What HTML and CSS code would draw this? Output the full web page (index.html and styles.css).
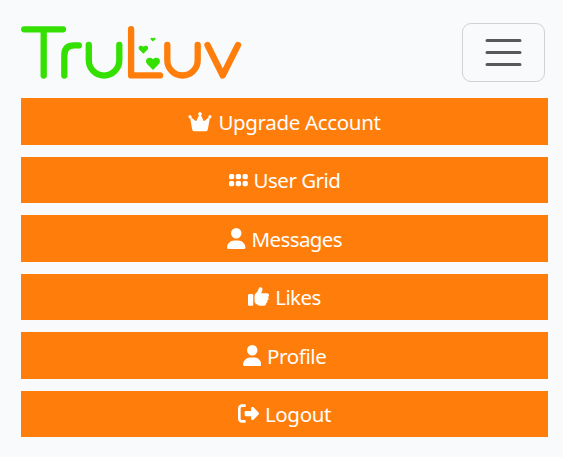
FILE: index.html
```html
<!DOCTYPE html>
<html lang="en">
<head>
<meta charset="utf-8">
<title>TruLuv</title>
<link rel="stylesheet" href="styles.css">
</head>
<body>
<header class="bar">
  <svg class="logo" viewBox="21 26 221 54" role="img" aria-label="TruLuv">
    <g class="stroke green">
      <path d="M24.2 29.3H63M43.7 29.3V75.5"/>
      <path d="M64.3 75.500V55.400Q64.300 45.400 74.300 45.400H78.800"/>
      <path d="M88.8 45V60.3a15.25 15.25 0 0 0 30.5 0V45"/>
    </g>
    <g class="stroke orange">
      <path d="M131.1 29.2V75.4H160"/>
      <path d="M167.3 45V60.3a15.2 15.2 0 0 0 30.4 0V45"/>
      <path d="M207.5 45L222.7 75.5L238 45"/>
    </g>
    <g class="hearts">
      <path d="M153 70L147.3 64.3C143.5 60 148.800 55.500 153 59.300C157.200 55.500 162.500 60 158.700 64.300Z"/>
      <path d="M143.400 53.700L139.600 50C137 47 140.600 44.200 143.400 46.800C146.200 44.200 149.800 47 147.200 50Z"/>
      <path d="M153 41.600L151 39.800C149.400 38 151.500 36.900 153 38.200C154.500 36.900 156.600 38 155 39.800Z"/>
    </g>
  </svg>
  <button class="toggler" aria-label="Menu">
    <svg viewBox="0 0 30 30"><path d="M4 7h22M4 15h22M4 23h22"/></svg>
  </button>
</header>
<nav class="menu">
  <a class="item"><svg class="icon crown" viewBox="0 0 24 20"><path d="M4.200 17.500L2.200 6.200A1.500 1.500 0 1 1 3.300 5.500L7.600 9Q8.200 9.300 8.600 8.600L11 3.300A1.700 1.700 0 1 1 13 3.300L15.400 8.600Q15.800 9.300 16.400 9L20.700 5.500A1.500 1.500 0 1 1 21.800 6.200L19.800 17.500Q19.500 19.200 18 19.200H6Q4.500 19.200 4.200 17.500Z"/></svg><span class="upgrade">Upgrade Account</span></a>
  <a class="item"><svg class="icon grid" viewBox="0 0 19 14"><rect x="0" y="1" width="5.200" height="5.200" rx="1.600"/><rect x="6.800" y="1" width="5.200" height="5.200" rx="1.600"/><rect x="13.600" y="1" width="5.200" height="5.200" rx="1.600"/><rect x="0" y="8" width="5.200" height="5.200" rx="1.600"/><rect x="6.800" y="8" width="5.200" height="5.200" rx="1.600"/><rect x="13.600" y="8" width="5.200" height="5.200" rx="1.600"/></svg><span class="users">User Grid</span></a>
  <a class="item"><svg class="icon person" viewBox="0 0 448 512"><path d="M224 256A128 128 0 1 0 224 0a128 128 0 1 0 0 256zm-45.700 48C79.800 304 0 383.800 0 482.300 0 498.700 13.300 512 29.700 512h388.600c16.400 0 29.700-13.300 29.700-29.700 0-98.500-79.800-178.300-178.300-178.300z"/></svg><span class="messages">Messages</span></a>
  <a class="item"><svg class="icon thumb" viewBox="0 0 512 512"><path d="M313.400 32.900c26 5.200 42.900 30.500 37.700 56.500l-2.300 11.400c-5.300 26.700-15.100 52.100-28.800 75.200H464c26.500 0 48 21.500 48 48 0 18.500-10.500 34.600-25.900 42.600C497 275.400 504 288.900 504 304c0 23.400-16.800 42.900-38.900 47.100 4.400 7.300 6.900 15.800 6.900 24.900 0 21.300-13.900 39.400-33.100 45.600.7 3.300 1.100 6.800 1.100 10.400 0 26.500-21.500 48-48 48h-97.500c-19 0-37.500-5.600-53.300-16.100l-38.500-25.700C176 420.400 160 390.400 160 358.300V247.100c0-29.200 13.300-56.700 36-75l7.400-5.900c26.500-21.200 44.600-51 51.200-84.200l2.300-11.400c5.200-26 30.500-42.900 56.500-37.700zM32 192h64c17.700 0 32 14.300 32 32v224c0 17.700-14.300 32-32 32H32c-17.700 0-32-14.300-32-32V224c0-17.700 14.300-32 32-32z"/></svg><span class="likes">Likes</span></a>
  <a class="item"><svg class="icon person" viewBox="0 0 448 512"><path d="M224 256A128 128 0 1 0 224 0a128 128 0 1 0 0 256zm-45.700 48C79.800 304 0 383.800 0 482.300 0 498.700 13.300 512 29.700 512h388.600c16.400 0 29.700-13.300 29.700-29.700 0-98.500-79.800-178.300-178.300-178.300z"/></svg><span class="profile">Profile</span></a>
  <a class="item"><svg class="icon exit" viewBox="0 0 512 512"><path d="M377.900 105.900L500.700 228.700c7.200 7.200 11.300 17.100 11.300 27.300s-4.100 20.100-11.300 27.300L377.900 406.100c-6.400 6.400-15 9.900-24 9.900-18.700 0-33.900-15.200-33.900-33.900V320H192c-17.700 0-32-14.300-32-32v-64c0-17.700 14.300-32 32-32h128v-62.100c0-18.700 15.200-33.900 33.900-33.900 9 0 17.600 3.600 24 9.900zM160 96H96c-17.700 0-32 14.300-32 32v256c0 17.700 14.300 32 32 32h64c17.700 0 32 14.300 32 32s-14.300 32-32 32H96c-53 0-96-43-96-96V128c0-53 43-96 96-96h64c17.700 0 32 14.300 32 32s-14.300 32-32 32z"/></svg><span class="logout">Logout</span></a>
</nav>
</body>
</html>
```
FILE: styles.css
```css
* { box-sizing: border-box; }
body {
  margin: 0;
  min-height: 457px;
  padding: 23px 15px 0 21px;
  background: #f8fafc;
  font-family: "Segoe UI", "Noto Sans", "Open Sans", sans-serif;
}
.bar {
  display: flex;
  justify-content: space-between;
  align-items: flex-start;
  height: 75px;
  padding-right: 3px;
}
.logo { width: 221px; height: 54px; margin-top: 3px; overflow: visible; }
.stroke {
  fill: none;
  stroke-width: 6.300;
  stroke-linecap: round;
  stroke-linejoin: round;
}
.green { stroke: #33e000; }
.orange { stroke: #ff7e0b; }
.hearts { fill: #33e000; }
.toggler {
  display: flex;
  align-items: center;
  justify-content: center;
  width: 83px;
  height: 59px;
  padding: 0;
  border: 1px solid #d0d2d4;
  border-radius: 9px;
  background: transparent;
}
.toggler svg { width: 45px; height: 45px; }
.toggler path {
  fill: none;
  stroke: #58595a;
  stroke-width: 2;
  stroke-linecap: round;
}
.menu { display: grid; gap: 12px; }
.item {
  display: flex;
  align-items: center;
  justify-content: center;
  gap: 6px;
  height: 46.500px;
  background: #ff7e0b;
  color: #fff;
  font-size: 20.500px;
  line-height: 32px;
  white-space: nowrap;
}
.item span { margin-top: 1px; }
.upgrade { letter-spacing: -0.330px; }
.users { letter-spacing: -0.500px; }
.messages { letter-spacing: -0.600px; }
.likes { letter-spacing: -0.550px; }
.profile { letter-spacing: -0.400px; }
.logout { letter-spacing: -0.330px; }
.icon { flex: none; fill: #fff; }
.crown { width: 24px; height: 20px; margin-top: 1px; }
.grid { width: 19px; height: 14px; margin-top: 1px; }
.person { width: 18.500px; height: 21px; }
.thumb, .exit { width: 21px; height: 21px; }
```
